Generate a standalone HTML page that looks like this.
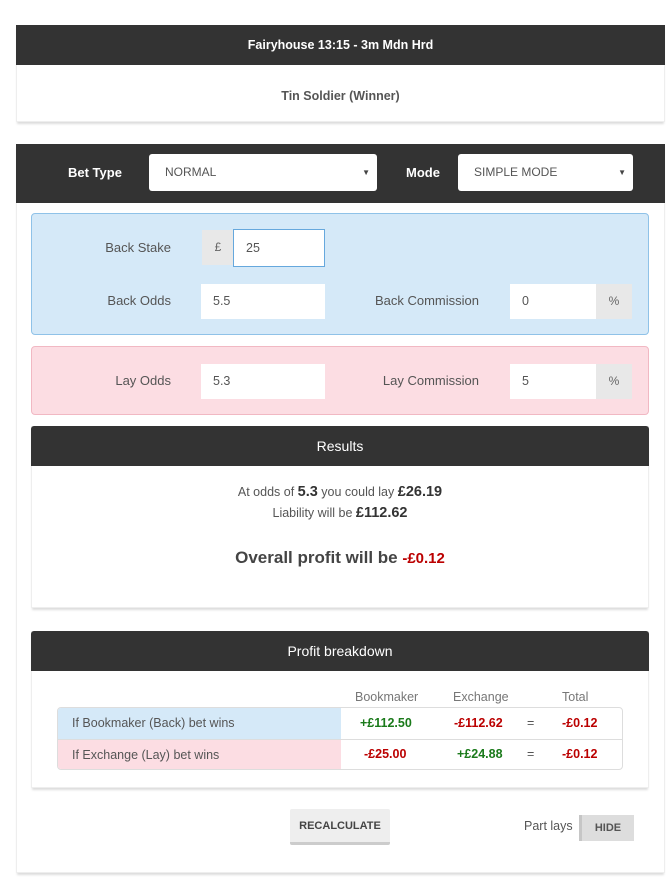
<!DOCTYPE html>
<html><head><style>
*{box-sizing:border-box;margin:0;padding:0}
body{width:669px;height:882px;background:#fff;font-family:"Liberation Sans",sans-serif;color:#555;position:relative;overflow:hidden}
.a{position:absolute}
.card{position:absolute;background:#fff;box-shadow:0 3px 2px -1px #ddd;border:1px solid #eee}
.dark{position:absolute;background:#333;color:#fff;text-align:center}
.sel{position:absolute;background:#fff;border-radius:3px;color:#555;font-size:12px;padding-left:16px;line-height:37px}
.sel:after{content:"▼";position:absolute;right:7px;top:0;font-size:8px;color:#444}
.lbl{position:absolute;font-size:13px;color:#555;text-align:right}
.inp{position:absolute;background:#fff;font-size:12.5px;color:#555;padding-left:12px;line-height:35px;height:35px}
.add{position:absolute;background:#e8e8e8;font-size:12px;color:#666;text-align:center;line-height:35px;height:35px}
.r{color:#b00}.g{color:#1a7a1a}
</style></head><body>
<div class="card" style="left:16px;top:25px;width:649px;height:97px"></div>
<div class="dark" style="left:16px;top:25px;width:649px;height:40px;line-height:40px;font-size:12.5px;font-weight:bold">Fairyhouse 13:15 - 3m Mdn Hrd</div>
<div class="a" style="left:16px;top:89px;width:649px;text-align:center;font-size:12.5px;font-weight:bold;color:#555">Tin Soldier (Winner)</div>

<div class="card" style="left:16px;top:144px;width:649px;height:729px"></div>
<div class="dark" style="left:16px;top:144px;width:649px;height:59px"></div>
<div class="a" style="left:68px;top:165px;color:#fff;font-size:13px;font-weight:bold">Bet Type</div>
<div class="sel" style="left:149px;top:154px;width:228px;height:37px">NORMAL</div>
<div class="a" style="left:406px;top:165px;color:#fff;font-size:13px;font-weight:bold">Mode</div>
<div class="sel" style="left:458px;top:154px;width:175px;height:37px">SIMPLE MODE</div>

<div class="a" style="left:31px;top:213px;width:618px;height:122px;background:#d5e9f8;border:1px solid #8fc2e8;border-radius:4px"></div>
<div class="lbl" style="left:60px;top:240px;width:111px">Back Stake</div>
<div class="add" style="left:202px;top:230px;width:32px">£</div>
<div class="inp" style="left:233px;top:229px;width:92px;height:38px;line-height:36px;border:1px solid #66a8dd">25</div>
<div class="lbl" style="left:60px;top:293px;width:111px">Back Odds</div>
<div class="inp" style="left:201px;top:284px;width:124px">5.5</div>
<div class="lbl" style="left:330px;top:293px;width:149px">Back Commission</div>
<div class="inp" style="left:510px;top:284px;width:86px">0</div>
<div class="add" style="left:596px;top:284px;width:36px">%</div>

<div class="a" style="left:31px;top:346px;width:618px;height:69px;background:#fcdde3;border:1px solid #f1b8c3;border-radius:4px"></div>
<div class="lbl" style="left:60px;top:373px;width:111px">Lay Odds</div>
<div class="inp" style="left:201px;top:364px;width:124px">5.3</div>
<div class="lbl" style="left:330px;top:373px;width:149px">Lay Commission</div>
<div class="inp" style="left:510px;top:364px;width:86px">5</div>
<div class="add" style="left:596px;top:364px;width:36px">%</div>

<div class="card" style="left:31px;top:426px;width:618px;height:182px"></div>
<div class="dark" style="left:31px;top:426px;width:618px;height:40px;line-height:40px;font-size:14px;border-radius:3px 3px 0 0">Results</div>
<div class="a" style="left:31px;top:484px;width:618px;text-align:center;font-size:12.5px">At odds of <b style="font-size:14.5px;color:#333">5.3</b> you could lay <b style="font-size:14.5px;color:#333">£26.19</b></div>
<div class="a" style="left:31px;top:505px;width:618px;text-align:center;font-size:12.5px">Liability will be <b style="font-size:14.5px;color:#333">£112.62</b></div>
<div class="a" style="left:31px;top:548px;width:618px;text-align:center;font-size:17px;font-weight:bold;color:#444">Overall profit will be <span class="r" style="font-size:15px">-£0.12</span></div>

<div class="card" style="left:31px;top:631px;width:618px;height:157px"></div>
<div class="dark" style="left:31px;top:631px;width:618px;height:40px;line-height:40px;font-size:14px;border-radius:3px 3px 0 0">Profit breakdown</div>
<div class="a" style="left:355px;top:690px;font-size:12.5px;color:#777">Bookmaker</div>
<div class="a" style="left:453px;top:690px;font-size:12.5px;color:#777">Exchange</div>
<div class="a" style="left:562px;top:690px;font-size:12.5px;color:#777">Total</div>
<div class="a" style="left:57px;top:707px;width:566px;height:63px;border:1px solid #ddd;border-radius:4px;overflow:hidden;font-size:12.5px">
<div class="a" style="left:0;top:0;width:283px;height:31px;background:#d5e9f8;padding-left:14px;line-height:31px">If Bookmaker (Back) bet wins</div>
<div class="a" style="left:0;top:31px;width:283px;height:31px;background:#fcdde3;padding-left:14px;line-height:31px;border-top:1px solid #ddd">If Exchange (Lay) bet wins</div>
<div class="a" style="left:283px;top:31px;width:283px;border-top:1px solid #ddd"></div>
<div class="a g" style="left:302px;top:8px;font-weight:bold">+£112.50</div>
<div class="a r" style="left:396px;top:8px;font-weight:bold">-£112.62</div>
<div class="a" style="left:469px;top:8px">=</div>
<div class="a r" style="left:504px;top:8px;font-weight:bold">-£0.12</div>
<div class="a r" style="left:306px;top:39px;font-weight:bold">-£25.00</div>
<div class="a g" style="left:399px;top:39px;font-weight:bold">+£24.88</div>
<div class="a" style="left:469px;top:39px">=</div>
<div class="a r" style="left:504px;top:39px;font-weight:bold">-£0.12</div>
</div>

<div class="a" style="left:290px;top:809px;width:100px;height:36px;background:#eee;border-bottom:3px solid #ccc;border-radius:2px;font-size:11px;font-weight:bold;color:#444;text-align:center;line-height:35px">RECALCULATE</div>
<div class="a" style="left:524px;top:819px;font-size:12.5px;color:#555">Part lays</div>
<div class="a" style="left:579px;top:815px;width:55px;height:26px;background:#ddd;border-left:3px solid #c6c6c6;font-size:11px;font-weight:bold;color:#555;text-align:center;line-height:26px">HIDE</div>
</body></html>
